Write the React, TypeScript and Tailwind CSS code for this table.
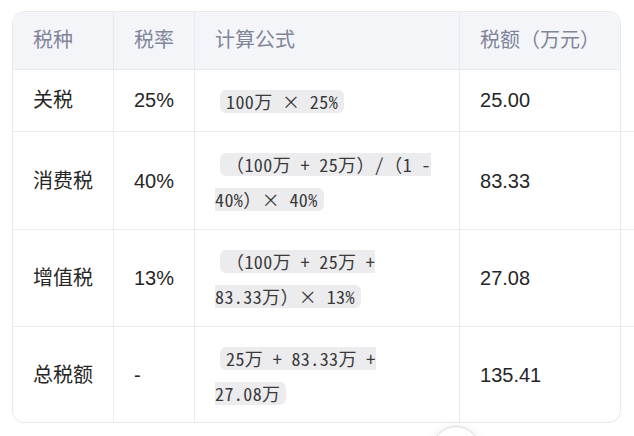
import React from 'react';

type Row = { name: string; rate: string; formula: string[]; amount: string };

const ROWS: Row[] = [
  { name: '关税', rate: '25%', formula: ['100万 × 25%'], amount: '25.00' },
  { name: '消费税', rate: '40%', formula: ['（100万 + 25万）/（1 -', '40%）× 40%'], amount: '83.33' },
  { name: '增值税', rate: '13%', formula: ['（100万 + 25万 +', '83.33万）× 13%'], amount: '27.08' },
  { name: '总税额', rate: '-', formula: ['25万 + 83.33万 +', '27.08万'], amount: '135.41' },
];

const codeFont = { fontFamily: '"Noto Sans Mono CJK SC", "Liberation Mono", "Noto Sans CJK SC", monospace' };

const Formula: React.FC<{ lines: string[] }> = ({ lines }) => (
  <>
    {lines.map((line, i) => {
      const isFirst = i === 0;
      const isLast = i === lines.length - 1;
      return (
        <React.Fragment key={i}>
          <span
            style={codeFont}
            className={`inline-block h-[23px] leading-[23px] align-middle bg-[#ececee] text-[#3a3a3a] text-[18px] tracking-[0.4px] whitespace-pre ${
              isFirst ? 'ml-[5px] pl-[6px] rounded-l-[6px]' : ''
            } ${isLast ? 'pr-[6px] rounded-r-[6px]' : ''}`}
          >
            {line}
          </span>
          {!isLast && <br />}
        </React.Fragment>
      );
    })}
  </>
);

export default function App() {
  return (
    <div
      className="relative w-[634px] h-[436px] overflow-hidden bg-white pt-[11px] pl-[12px] flex"
      style={{ fontFamily: '"Liberation Sans", "Noto Sans CJK SC", sans-serif' }}
    >
      <div className="w-[609px] h-[412px] border border-[#e8e9ee] rounded-[12px] overflow-hidden">
        <table className="w-full border-separate border-spacing-0 text-[20px]">
          <colgroup>
            <col className="w-[101px]" />
            <col className="w-[81px]" />
            <col className="w-[265px]" />
            <col />
          </colgroup>
          <thead>
            <tr className="bg-[#f4f5f9] text-[#80859a] text-left">
              <th className="font-normal px-[20px] py-[14px] leading-[29px] border-b border-r border-[#e8e9ee]">税种</th>
              <th className="font-normal px-[20px] py-[14px] leading-[29px] border-b border-r border-[#e8e9ee]">税率</th>
              <th className="font-normal px-[20px] py-[14px] leading-[29px] border-b border-r border-[#e8e9ee]">计算公式</th>
              <th className="font-normal px-[20px] py-[14px] leading-[29px] border-b border-[#e8e9ee]">税额（万元）</th>
            </tr>
          </thead>
          <tbody className="text-[#262626]">
            {ROWS.map((r, i) => {
              const last = i === ROWS.length - 1;
              const pad = i === 1 ? 'pt-[14px] pb-[13px]' : 'py-[13px]';
              const bb = last ? '' : 'border-b';
              return (
                <tr key={r.name}>
                  <td className={`px-[20px] ${pad} leading-[35px] border-r ${bb} border-[#ececf0]`}>{r.name}</td>
                  <td className={`px-[20px] ${pad} leading-[35px] border-r ${bb} border-[#ececf0]`}>{r.rate}</td>
                  <td className={`pl-[20px] pr-[6px] ${pad} leading-[35px] border-r ${bb} border-[#ececf0]`}>
                    <Formula lines={r.formula} />
                  </td>
                  <td className={`px-[20px] ${pad} leading-[35px] ${bb} border-[#ececf0]`}>{r.amount}</td>
                </tr>
              );
            })}
          </tbody>
        </table>
      </div>

      {/* row dividers running past the table's right edge */}
      <div className="flex-1 flex flex-col">
        <div className="h-[120px]" />
        <div className="h-px bg-[#ececf0]" />
        <div className="h-[97px]" />
        <div className="h-px bg-[#ececf0]" />
        <div className="h-[96px]" />
        <div className="h-px bg-[#ececf0]" />
      </div>

      {/* scroll-down button, cut off by the window */}
      <div className="absolute left-[432px] top-[426px] w-[48px] h-[48px] rounded-full bg-white border border-[#d9dae2] shadow-[0_0_8px_rgba(0,0,0,0.08)]" />
    </div>
  );
}
